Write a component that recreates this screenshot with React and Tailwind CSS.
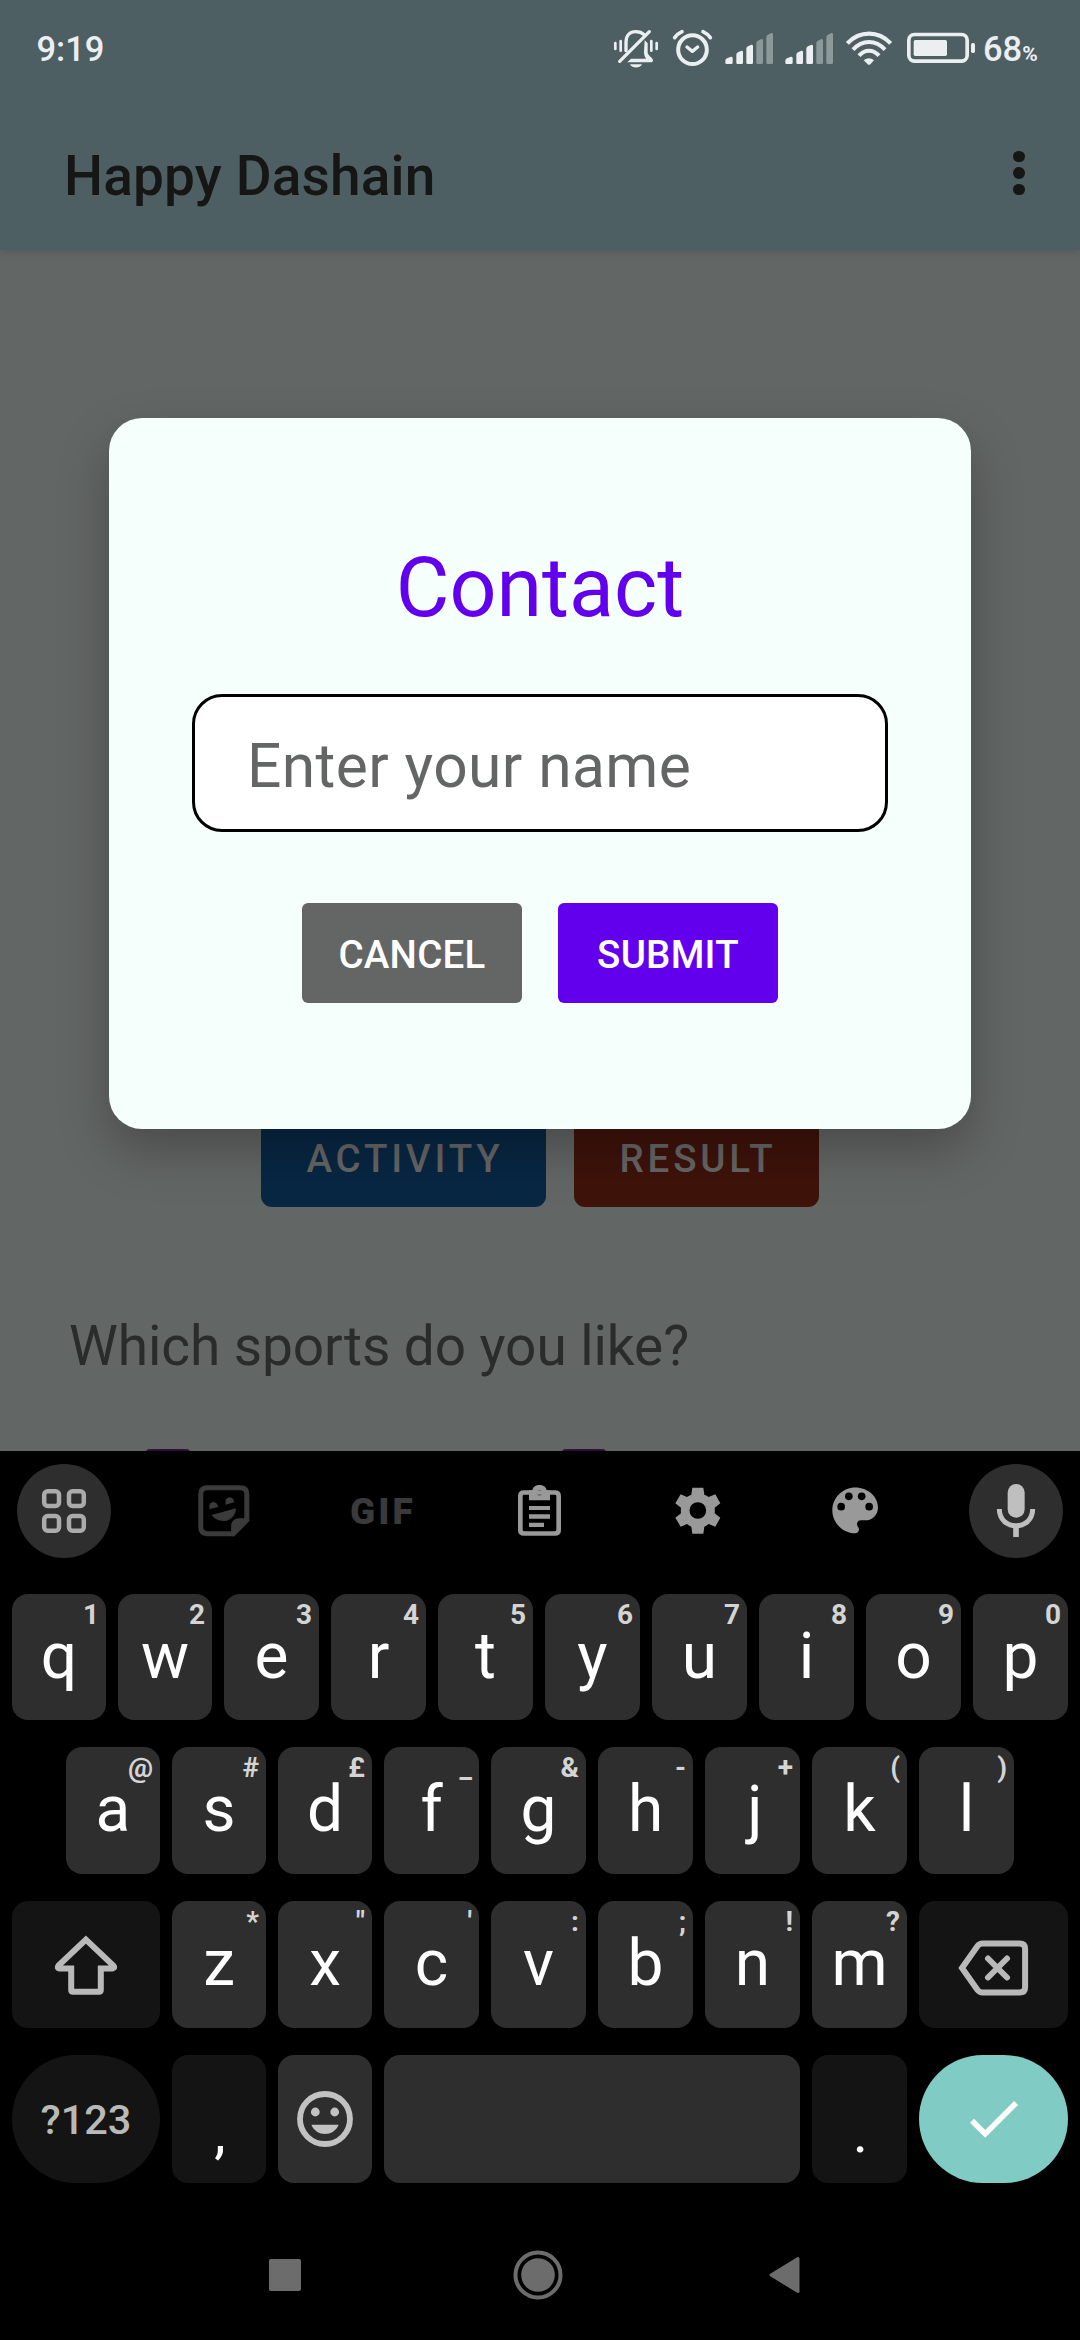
const INK = '#eceff1';

function BellOffIcon() {
  return (
    <svg width="46" height="40" viewBox="99 87 138 120" fill="none" stroke={INK} strokeLinecap="round">
      <path d="M119 184 L208 95" strokeWidth="10" />
      <path d="M138 152 V126 C138 106 150 95 167 95 C178 95 186 98 192 104" strokeWidth="10" />
      <path d="M194 121 L203 130 V158 C204 166 219 174 219 180 C219 184 217 187 213 187 H142 L153 176 H198 C193 168 192 162 192 155 Z" fill={INK} stroke="none" />
      <path d="M150 193 H186 C180 206 156 206 150 193 Z" fill={INK} stroke="none" />
      <path d="M106 129 V147 M122 123 V152 M214 123 V152 M230 129 V147" strokeWidth="8" />
    </svg>
  );
}

function AlarmIcon() {
  return (
    <svg width="41" height="40" viewBox="276 87 123 120" fill="none" stroke={INK} strokeLinecap="round" strokeLinejoin="round">
      <circle cx="337.500" cy="149" r="43" strokeWidth="12" />
      <path d="M321 141 L337 154 L353 141" strokeWidth="10" />
      <path d="M284 113 Q293 101 306 95 M369 95 Q382 101 391 113" strokeWidth="11" />
    </svg>
  );
}

const BARS = [
  { x: 436, top: 170, w: 22 },
  { x: 469, top: 152, w: 20 },
  { x: 499, top: 134, w: 20 },
  { x: 529, top: 117, w: 20 },
  { x: 559, top: 99, w: 20 },
];

function SignalIcon() {
  return (
    <svg width="50" height="40" viewBox="432 87 150 120">
      {BARS.map((b, i) => (
        <path
          key={b.x}
          d={`M${b.x} ${b.top + 12} Q${b.x} ${b.top + 7} ${b.x + 5} ${b.top + 5} L${b.x + b.w - 5} ${b.top} Q${b.x + b.w} ${b.top} ${b.x + b.w} ${b.top + 4} V188 Q${b.x + b.w} 192 ${b.x + b.w - 4} 192 H${b.x + 4} Q${b.x} 192 ${b.x} 188 Z`}
          fill={i < 3 ? INK : '#8d9899'}
        />
      ))}
    </svg>
  );
}

function WifiIcon() {
  return (
    <svg width="48" height="40" viewBox="795 87 144 120" fill="none" stroke={INK}>
      <path d="M802 130 Q830 101 867 101 Q904 101 932 130" strokeWidth="12.500" />
      <path d="M819 149 Q840 126 867 126 Q894 126 915 149" strokeWidth="12" />
      <path d="M837 167 Q850 152 867 152 Q884 152 897 167" strokeWidth="12" />
      <path d="M851 181 Q867 168 882 181 L871 193 Q867 196 863 193 Z" fill={INK} stroke="none" />
    </svg>
  );
}

function BatteryIcon() {
  return (
    <svg width="70" height="40" viewBox="978 87 210 120">
      <rect x="986.500" y="103.500" width="175" height="80" rx="17" fill="none" stroke={INK} strokeWidth="11" />
      <rect x="1001" y="120" width="100" height="48" rx="5" fill={INK} />
      <rect x="1173" y="129" width="12" height="30" rx="5" fill={INK} />
    </svg>
  );
}

function StatusBar() {
  return (
    <div className="flex h-[98px] items-center pl-[36.500px] text-[#eceff1] font-medium">
      <span className="text-[34.500px] leading-none">9:19</span>
      <div className="ml-auto mr-[43px] flex h-[98px] items-center">
        <BellOffIcon />
        <div className="ml-[13px]"><AlarmIcon /></div>
        <div className="ml-[11px]"><SignalIcon /></div>
        <div className="ml-[10px]"><SignalIcon /></div>
        <div className="ml-[11px]"><WifiIcon /></div>
        <div className="ml-[13px]"><BatteryIcon /></div>
        <div className="ml-[7px] flex w-[54px] items-baseline whitespace-nowrap leading-none">
          <span className="text-[34.500px]">68</span>
          <span className="text-[21px] font-bold">%</span>
        </div>
      </div>
    </div>
  );
}

function AppBar() {
  return (
    <header className="relative h-[250px] bg-[#4e5f63] shadow-[0_2px_8px_rgba(0,0,0,0.14)]">
      <StatusBar />
      <div className="mt-[4px] flex h-[148px] items-center justify-between pl-[64px] pr-[55px]">
        <h1 className="text-[55px] font-medium leading-none tracking-[0.150px] text-[#161715]">Happy Dashain</h1>
        <div className="flex -translate-y-[3px] flex-col gap-[5px]">
          <i className="size-[11.600px] rounded-full bg-[#161715]" />
          <i className="size-[11.600px] rounded-full bg-[#161715]" />
          <i className="size-[11.600px] rounded-full bg-[#161715]" />
        </div>
      </div>
    </header>
  );
}

function Page() {
  return (
    <main className="flex h-[1201px] flex-col overflow-hidden">
      <div className="mt-[858px] flex justify-center gap-[28px] text-[38.500px] font-medium tracking-[3.800px] text-[#666666]">
        <button className="h-[99px] w-[285px] rounded-[11px] bg-[#082743] pl-[3px] pt-[2px]">ACTIVITY</button>
        <button className="h-[99px] w-[245px] rounded-[11px] bg-[#3e130a] pl-[3px] pt-[2px]">RESULT</button>
      </div>
      <p className="mt-[107px] pl-[69px] text-[55px] leading-[64px] tracking-[-0.080px] text-[#292c2b]">Which sports do you like?</p>
      <div className="mt-[71px] flex gap-[370px] pl-[145px]">
        <span className="h-[46px] w-[46px] rounded-[5px] border-[5px] border-[#320f3b]" />
        <span className="h-[46px] w-[46px] rounded-[5px] border-[5px] border-[#320f3b]" />
      </div>
    </main>
  );
}

function ContactDialog() {
  return (
    <div
      role="dialog"
      className="absolute left-[109px] top-[418px] flex h-[711px] w-[862px] flex-col items-center rounded-[33px] bg-[#f5fffc] shadow-[0_22px_50px_rgba(0,0,0,0.26)]"
    >
      <h2 className="mt-[129px] text-[82.500px] leading-[82px] text-[#6200ee]">Contact</h2>
      <div className="mt-[65px] flex h-[138px] w-[696px] items-center rounded-[30px] border-[3px] border-black bg-white pl-[52px]">
        <span className="translate-y-[4px] text-[60.500px] leading-none tracking-[0.400px] text-[#646665]">Enter your name</span>
      </div>
      <div className="mt-[71px] flex gap-[36px] text-[38.500px] font-medium tracking-[0.250px] text-white">
        <button className="h-[100px] w-[220px] rounded-[6px] bg-[#646665] pt-[4px]">CANCEL</button>
        <button className="h-[100px] w-[220px] rounded-[6px] bg-[#6200ee] pt-[4px]">SUBMIT</button>
      </div>
    </div>
  );
}

function Slot({ children, round }) {
  return (
    <div className={round ? 'flex size-[94px] items-center justify-center rounded-full bg-[#2e2e2e]' : 'flex size-[94px] items-center justify-center'}>
      {children}
    </div>
  );
}

function Toolbar() {
  return (
    <div className="flex justify-between px-[17px] pt-[13px]">
      <Slot round>
        <svg width="46" height="46" viewBox="0 0 46 46" fill="none" stroke="#ababab" strokeWidth="4.500">
          <rect x="3.200" y="3.200" width="14.800" height="14.800" rx="3.500" />
          <rect x="28" y="3.200" width="14.800" height="14.800" rx="3.500" />
          <rect x="3.200" y="28" width="14.800" height="14.800" rx="3.500" />
          <rect x="28" y="28" width="14.800" height="14.800" rx="3.500" />
        </svg>
      </Slot>
      <Slot>
        <svg width="54" height="54" viewBox="17.600 26 162 162" fill="#3a3a3a">
          <path d="M51 37 H151 Q170 37 170 56 V133 L129 175 H51 Q32 175 32 156 V56 Q32 37 51 37 Z" fill="none" stroke="#3a3a3a" strokeWidth="15" />
          <path d="M123 183 V154 Q123 129 148 129 H177 V138 L132 183 Z" />
          <path d="M58 102 Q54 81 70 80 Q82 82 84 95 Z M106 88 Q103 67 119 66 Q131 68 132 81 Z" />
          <path d="M64 119 L138 99 Q137 126 110 136 Q82 141 64 119 Z" />
        </svg>
      </Slot>
      <Slot>
        <span className="pl-[3px] text-[37px] font-black leading-none tracking-[3px] text-[#3a3a3a]">GIF</span>
      </Slot>
      <Slot>
        <svg width="54" height="54" viewBox="969 27 162 162" fill="#999999">
          <path d="M1002 52.500 H1095 Q1106 52.500 1106 63 V165 Q1106 175.500 1095 175.500 H1002 Q991 175.500 991 165 V63 Q991 52.500 1002 52.500 Z" fill="none" stroke="#999999" strokeWidth="14" />
          <path fillRule="evenodd" d="M1017 76 V46 H1027 C1030 25 1067 25 1070 46 H1080 V76 Z M1056.500 53 A8 8 0 1 0 1040.500 53 A8 8 0 1 0 1056.500 53 Z" />
          <path d="M1017 93 H1080 V105 H1017 Z M1017 118 H1080 V131 H1017 Z M1017 143 H1062 V156 H1017 Z" />
        </svg>
      </Slot>
      <Slot>
        <svg width="54" height="54" viewBox="35 27 162 162">
          <path
            fill="#999999"
            fillRule="evenodd"
            d="M96 38 H129 L132 59 Q139 61 145 66 L165 58 L180 85 L163 98 Q164 107 163 115 L180 128 L165 155 L145 147 Q139 152 132 155 L129 176 H96 L93 155 Q86 152 80 147 L61 155 L45 128 L62 115 Q61 107 62 98 L45 85 L61 58 L80 66 Q86 61 93 59 Z M137.500 106.500 A25 25 0 1 0 87.500 106.500 A25 25 0 1 0 137.500 106.500 Z"
          />
        </svg>
      </Slot>
      <Slot>
        <svg width="54" height="54" viewBox="511 27 162 162">
          <path fill="#999999" d="M587 37.500 C549 37.500 518 68 518 106 C518 144 549 175 587 175 C594 175 598 170 598 163 C598 160 597 157 595 155 C593 153 592 150 592 147 C592 141 597 136 604 136 H617 C638 136 655 119 655 98 C655 64 624 37.500 587 37.500 Z" />
          <circle cx="544.500" cy="95" r="11.500" />
          <circle cx="567.500" cy="64" r="11.500" />
          <circle cx="606" cy="64" r="11.500" />
          <circle cx="628.500" cy="95" r="11.500" />
        </svg>
      </Slot>
      <Slot round>
        <svg width="54" height="54" viewBox="987 24 162 162" fill="none" stroke="#bfbfbf">
          <rect x="1043" y="24" width="51" height="101" rx="25.500" fill="#bfbfbf" stroke="none" />
          <path d="M1018 99 C1018 166 1118 166 1118 99" strokeWidth="15" />
          <path d="M1068 150 V183" strokeWidth="17" />
        </svg>
      </Slot>
    </div>
  );
}

function LetterKey({ letter, hint, narrow }) {
  return (
    <div className={`relative flex shrink-0 justify-center rounded-[16px] bg-[#2e2e2e] pt-[31px] text-[64px] leading-[64px] text-white ${narrow ? 'w-[94px]' : 'w-[95px]'}`}>
      <span className={letter === 'j' ? 'pl-[5px]' : ''}>{letter}</span>
      <span className="absolute right-[7px] top-[7px] text-[28px] font-bold leading-[28px] text-[#d4d4d4]">{hint}</span>
    </div>
  );
}

function LetterKeys({ letters, hints, narrow }) {
  return letters.split('').map((letter, i) => (
    <LetterKey key={letter} letter={letter} hint={hints[i]} narrow={i < narrow} />
  ));
}

function Keyboard() {
  return (
    <section className="relative h-[889px] bg-black">
      <Toolbar />
      <div className="mt-[36px] flex flex-col gap-[27px] px-[12px]">
        <div className="flex h-[126px] gap-[12px]">
          <LetterKeys letters="qwertyuiop" hints="1234567890" narrow={2} />
        </div>
        <div className="flex h-[127px] gap-[12px] px-[54px]">
          <LetterKeys letters="asdfghjkl" hints="@#£_&-+()" narrow={3} />
        </div>
        <div className="flex h-[127px] gap-[12px]">
          <div className="flex w-[148px] items-center justify-center rounded-[16px] bg-[#141414]">
            <svg width="72" height="68" viewBox="49.500 1930 72 68" fill="none" stroke="#b9b9b9" strokeWidth="6">
              <path d="M69 1967.500 H59 Q56 1967 58 1964.500 L85.400 1938.600 L112.800 1964.500 Q115 1967 112 1967.500 H100.300 V1989 Q100.300 1990.700 98.500 1990.700 H72.500 Q70.700 1990.700 70.700 1989 V1967.500 H66" />
            </svg>
          </div>
          <LetterKeys letters="zxcvbnm" hints={'*"\':;!?'} narrow={2} />
          <div className="flex w-[149px] items-center justify-center rounded-[16px] bg-[#141414]">
            <svg width="76" height="64" viewBox="955.500 1932.500 76 64" fill="none" stroke="#b9b9b9" strokeWidth="6">
              <path d="M961.500 1967.500 L977 1945.500 Q979 1943 982 1943 H1019 Q1024.600 1943 1024.600 1948 V1987 Q1024.600 1992 1019 1992 H982 Q979 1992 977 1989.500 Z" />
              <path d="M987.500 1958 L1006.500 1977 M1006.500 1958 L987.500 1977" strokeLinecap="round" />
            </svg>
          </div>
        </div>
        <div className="flex h-[128px] gap-[12px]">
          <div className="flex w-[148px] items-center justify-center rounded-full bg-[#141414] pt-[2px] text-[41.500px] font-medium leading-none text-[#b9b9b9]">
            ?123
          </div>
          <div className="flex w-[94px] justify-center rounded-[16px] bg-[#141414] pl-[2px] pt-[45px] text-[58px] leading-[64px] text-white">,</div>
          <div className="flex w-[94px] items-center justify-center rounded-[16px] bg-[#2e2e2e]">
            <svg width="56" height="56" viewBox="0 0 56 56" fill="#c2c2c2">
              <circle cx="28" cy="28" r="25" fill="none" stroke="#c2c2c2" strokeWidth="5.800" />
              <circle cx="18.300" cy="21" r="4.400" />
              <circle cx="37.700" cy="21" r="4.400" />
              <path d="M14.400 33.700 H41.600 C37 46 19 46 14.400 33.700 Z" />
            </svg>
          </div>
          <div className="flex-1 rounded-[16px] bg-[#2e2e2e]" />
          <div className="flex w-[95px] justify-center rounded-[16px] bg-[#141414] pl-[2px] pt-[45px] text-[58px] leading-[64px] text-white">.</div>
          <div className="flex w-[149px] items-center justify-center rounded-full bg-[#80cbc4]">
            <svg width="60" height="60" viewBox="963.500 2089 60 60" fill="none" stroke="#ffffff" strokeWidth="5.600">
              <path d="M971.500 2120.700 L984.700 2133.900 L1015.600 2103" />
            </svg>
          </div>
        </div>
      </div>
      <nav className="mt-[67px] flex h-[50px] items-center">
        <i className="ml-[269px] size-[32px] rounded-[2px] bg-[#6c6c6c]" />
        <svg className="ml-[211.500px]" width="50" height="50" viewBox="0 0 50 50">
          <circle cx="25" cy="25" r="22.500" fill="none" stroke="#6c6c6c" strokeWidth="4" />
          <circle cx="25" cy="25" r="16.800" fill="#6c6c6c" />
        </svg>
        <svg className="ml-[204.500px]" width="36" height="40" viewBox="0 0 36 40">
          <path d="M4 20 L31 3.500 V36.500 Z" fill="#6c6c6c" stroke="#6c6c6c" strokeWidth="3" strokeLinejoin="round" />
        </svg>
      </nav>
    </section>
  );
}

export default function App() {
  return (
    <div className="relative h-[2340px] w-[1080px] overflow-hidden bg-[#626664] font-['Roboto',sans-serif]">
      <AppBar />
      <Page />
      <ContactDialog />
      <Keyboard />
    </div>
  );
}
